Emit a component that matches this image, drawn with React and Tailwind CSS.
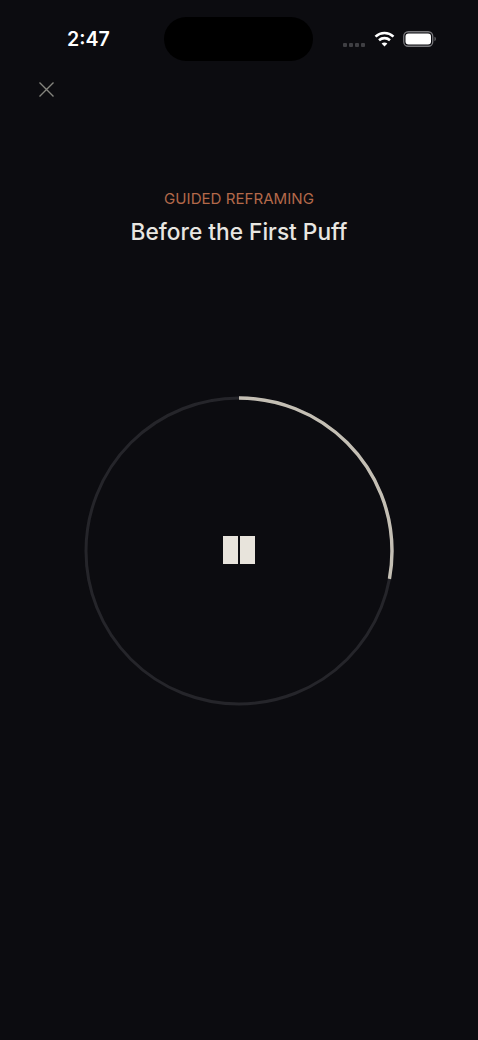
import React from 'react';

// ---- Status bar ----
function StatusBar() {
  return (
    <div className="flex items-center pt-4 pl-[67px]">
      <span className="w-[97px] text-[19.6px] leading-[46px] font-semibold text-white">2:47</span>
      <div className="w-[149px] h-[44px] rounded-full bg-black" />
      <div className="flex items-center ml-[30px]">
        <div className="flex gap-[2px] mt-[11px]">
          <span className="w-1 h-1 rounded-[1px] bg-[#3f3f43]" />
          <span className="w-1 h-1 rounded-[1px] bg-[#3f3f43]" />
          <span className="w-1 h-1 rounded-[1px] bg-[#3f3f43]" />
          <span className="w-1 h-1 rounded-[1px] bg-[#3f3f43]" />
        </div>
        <svg className="ml-[9px] -mt-[1px]" width="21" height="16" viewBox="0 0 21 16" fill="none" stroke="#fff" strokeWidth="2.6">
          <path d="M1.5 5.6C6.8 .8 14.2 .8 19.5 5.6" />
          <path d="M5 9.2c3.2-2.8 7.8-2.8 11 0" />
          <path d="M10.5 15.6 7.6 12.4c1.7-1.3 4.1-1.3 5.8 0z" fill="#fff" stroke="none" />
        </svg>
        <svg className="ml-[8px] -mt-[1px]" width="33" height="16" viewBox="0 0 33 16" fill="none">
          <rect x=".75" y=".75" width="29" height="14.5" rx="4.5" stroke="#77777b" strokeWidth="1.3" />
          <rect x="2.5" y="2.5" width="25.5" height="11" rx="3" fill="#fff" />
          <path d="M31.5 5.8c1 .3 1.3 1.2 1.3 2.2s-.3 1.9-1.3 2.2z" fill="#6a6a6e" />
        </svg>
      </div>
    </div>
  );
}

// ---- Progress ring with the pause control in its middle ----
function SessionRing() {
  const radius = 153;
  const circumference = 2 * Math.PI * radius;
  const progress = 0.279;

  return (
    <div className="grid place-items-center mt-[148px]">
      <svg className="col-start-1 row-start-1 -rotate-90" width="312" height="312" viewBox="0 0 312 312" fill="none">
        <circle cx="156" cy="156" r={radius} stroke="#25252a" strokeWidth="3" />
        <circle
          cx="156"
          cy="156"
          r={radius}
          stroke="#c4bfb4"
          strokeWidth="3.4"
          strokeDasharray={`${circumference * progress} ${circumference}`}
        />
      </svg>
      <button className="col-start-1 row-start-1 flex gap-[2px] mb-[2px]" aria-label="Pause">
        <span className="w-[15px] h-[28px] bg-[#e8e4dc]" />
        <span className="w-[15px] h-[28px] bg-[#e8e4dc]" />
      </button>
    </div>
  );
}

export default function App() {
  return (
    <div className="w-[478px] h-[1040px] overflow-hidden bg-[#0c0c10] font-['Inter',sans-serif]">
      <StatusBar />

      {/* Close button */}
      <button className="block mt-[19px] ml-[38px]" aria-label="Close">
        <svg className="block" width="17" height="17" viewBox="0 0 17 17" fill="none" stroke="#85857e" strokeWidth="1.4">
          <path d="M1.5 1.5 15.5 15.5M15.5 1.5 1.5 15.5" />
        </svg>
      </button>

      {/* Session heading */}
      <div className="flex flex-col items-center mt-[91px]">
        <p className="text-[15.1px] leading-[20px] text-[#b3694a]">GUIDED REFRAMING</p>
        <h1 className="mt-[8px] text-[22.7px] leading-[30px] font-[550] text-[#e8e6e1]">Before the First Puff</h1>
      </div>

      <SessionRing />
    </div>
  );
}
